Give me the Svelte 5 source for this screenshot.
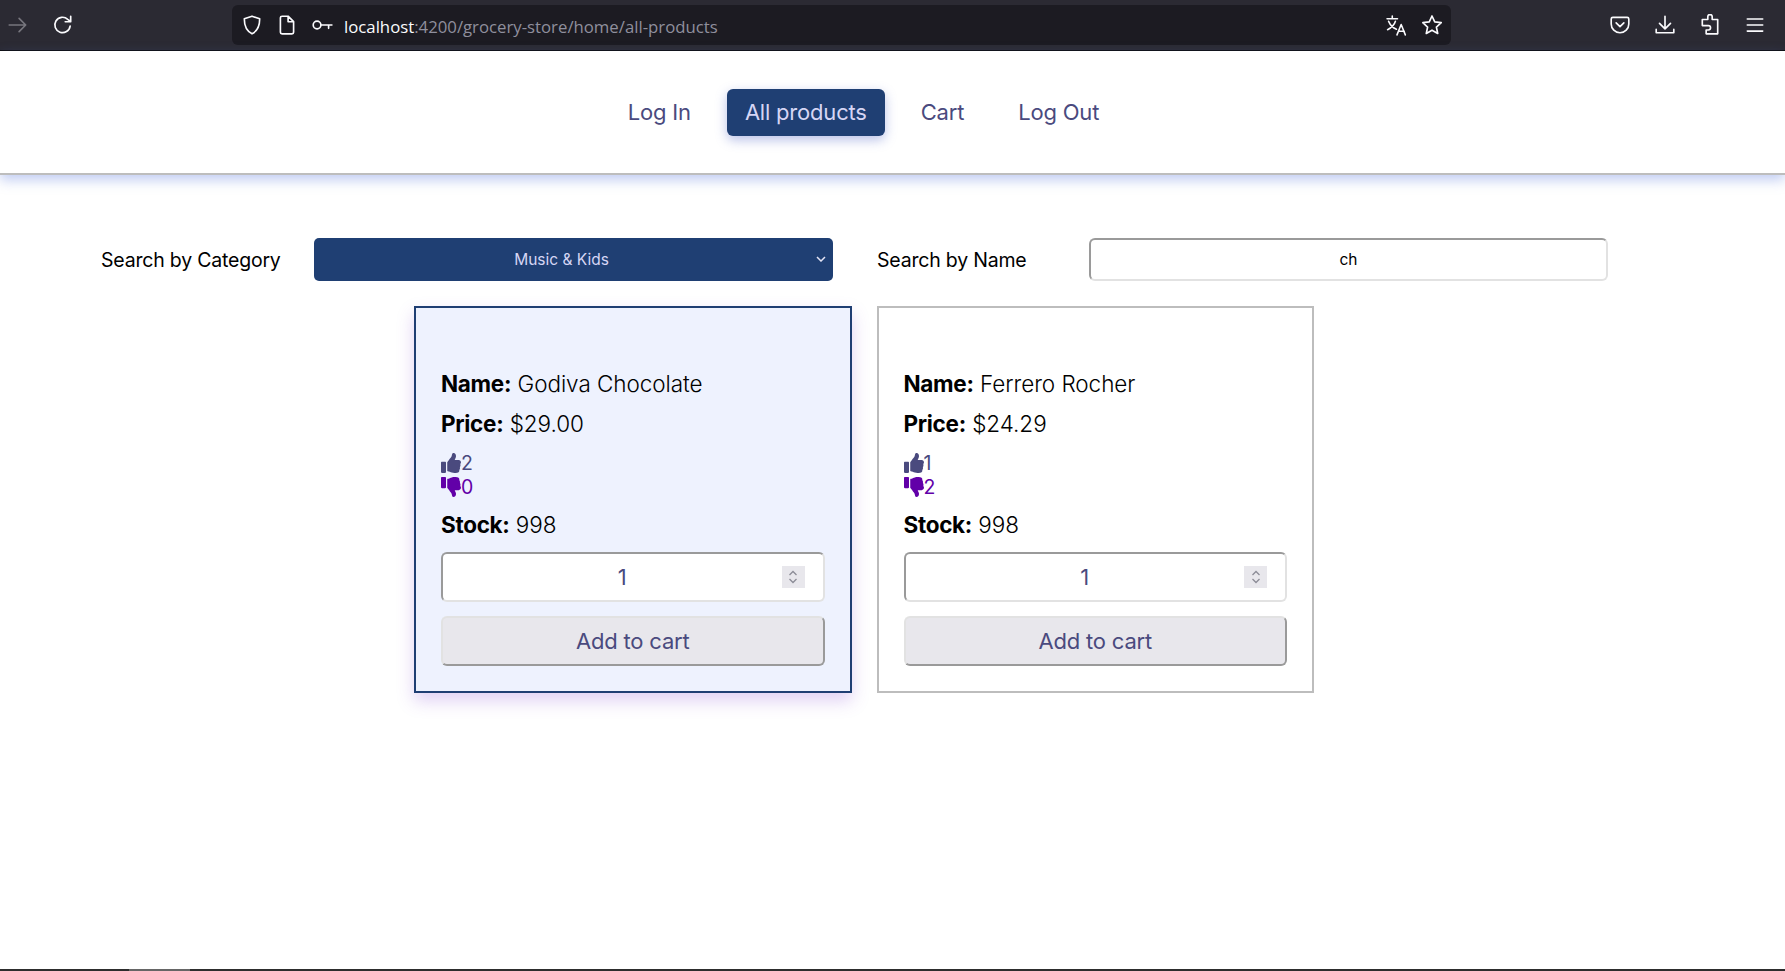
<script>
  const navItems = ['Log In', 'All products', 'Cart', 'Log Out'];
  const products = [
    { name: 'Godiva Chocolate', price: '$29.00', up: 2, down: 0, stock: 998, selected: true },
    { name: 'Ferrero Rocher', price: '$24.29', up: 1, down: 2, stock: 998, selected: false }
  ];
  const thumb = 'M104 224H24c-13.255 0-24 10.745-24 24v240c0 13.255 10.745 24 24 24h80c13.255 0 24-10.745 24-24V248c0-13.255-10.745-24-24-24zM384 81.452c0 42.416-25.97 66.208-33.277 94.548h101.723c33.397 0 59.397 27.746 59.553 58.098.084 17.938-7.546 37.249-19.439 49.197l-.11.11c9.836 23.337 8.237 56.037-9.308 79.469 8.681 25.895-.069 57.704-16.382 74.757 4.298 17.598 2.244 32.575-6.148 44.632C440.202 511.587 389.616 512 346.839 512l-2.845-.001c-48.287-.017-87.806-17.598-119.56-31.725-15.957-7.099-36.821-15.887-52.651-16.178-6.54-.12-11.783-5.457-11.783-11.998v-213.77c0-3.2 1.282-6.271 3.558-8.521 39.614-39.144 56.648-80.587 89.117-113.111 14.804-14.832 20.188-37.236 25.393-58.902C282.515 39.293 291.817 0 312 0c24 0 72 8 72 81.452z';
</script>

<div class="page">
  <header class="toolbar">
    <div class="tool-left">
      <svg class="ico dim" viewBox="0 0 20 20"><path d="M2 10h15M11 4l6 6-6 6" /></svg>
      <svg class="ico reload" viewBox="0 0 20 20"><path d="M16.500 11a7 7 0 1 1-2.200-6.200L17 7M17 2v5h-5" /></svg>
    </div>
    <div class="urlbar">
      <svg class="ico shield" viewBox="0 0 20 20"><path d="M10 2l7 2.400c0 6-1.200 10.800-7 13.600C4.200 15.200 3 10.400 3 4.400z" /></svg>
      <svg class="ico page-ico" viewBox="0 0 20 20"><path d="M4 3.500A1.500 1.500 0 0 1 5.500 2H11l5 5v9.500a1.500 1.500 0 0 1-1.500 1.500h-9A1.500 1.500 0 0 1 4 16.500zM11 2v5h5" /></svg>
      <svg class="ico key" viewBox="0 0 20 20"><circle cx="5.500" cy="10" r="3.500" /><path d="M9 10h10M16 10v3" /></svg>
      <span class="url"><b>localhost</b>:4200/grocery-store/home/all-products</span>
      <span class="url-spacer"></span>
      <svg class="ico translate" viewBox="0 0 22 22"><path d="M1 4.500h10M6 2v2.500M2.500 7c2 4.500 5 6.500 7.500 7.500M9 7c-1 3.500-3.500 6-7.500 8M10.500 20l4-10 4 10M12 16.500h5.500" /></svg>
      <svg class="ico star" viewBox="0 0 20 20"><path d="M10 1.800l2.500 5.400 5.900.7-4.400 4 1.200 5.800-5.200-3-5.200 3 1.200-5.800-4.400-4 5.900-.7z" /></svg>
    </div>
    <div class="tool-right">
      <svg class="ico" viewBox="0 0 20 20"><path d="M2 4.500A1.500 1.500 0 0 1 3.500 3h13A1.500 1.500 0 0 1 18 4.500V9a8 8 0 0 1-16 0zM6.500 8l3.500 3.500L13.500 8" /></svg>
      <svg class="ico" viewBox="0 0 20 20"><path d="M10 2v11M5 8.500l5 5 5-5M2 14v3h16v-3" /></svg>
      <svg class="ico" viewBox="0 0 20 20"><path d="M8 2.500a2 2 0 0 1 4 0V5h5v13H6.500v-3.500H8.500a2 2 0 0 0 0-4H3V5h5z" /></svg>
      <svg class="ico" viewBox="0 0 20 20"><path d="M3 4.500h14M3 10h14M3 15.500h14" /></svg>
    </div>
  </header>

  <nav class="nav">
    {#each navItems as item}
      <a class="nav-item" class:active={item === 'All products'} href="#top">{item}</a>
    {/each}
  </nav>

  <main class="content">
    <div class="search-row">
      <span class="label first">Search by Category</span>
      <div class="select-wrap">
        <select class="select">
          <option>Music &amp; Kids</option>
        </select>
        <svg class="chevron" viewBox="0 0 10 6"><path d="M1 1l4 4 4-4" /></svg>
      </div>
      <span class="label second">Search by Name</span>
      <input class="search" value="ch" />
    </div>

    <div class="cards">
      {#each products as p}
        <article class="card" class:selected={p.selected}>
          <p class="line"><strong>Name:</strong> {p.name}</p>
          <p class="line"><strong>Price:</strong> {p.price}</p>
          <div class="votes">
            <div class="vote up">
              <svg viewBox="0 0 512 512"><path d={thumb} /></svg>{p.up}
            </div>
            <div class="vote down">
              <svg class="flip" viewBox="0 0 512 512"><path d={thumb} /></svg>{p.down}
            </div>
          </div>
          <p class="line"><strong>Stock:</strong> {p.stock}</p>
          <div class="qty">
            <input class="qty-input" value="1" />
            <span class="spin">
              <svg viewBox="0 0 10 16"><path d="M1.500 6L5 2.500 8.500 6M1.500 10L5 13.500 8.500 10" /></svg>
            </span>
          </div>
          <button class="add">Add to cart</button>
        </article>
      {/each}
    </div>
  </main>

  <footer class="bottom-bar"><span class="thumb-seg"></span></footer>
</div>

<style>
  :global(body) {
    margin: 0;
    background: #fff;
  }
  .page {
    display: flex;
    flex-direction: column;
    height: 100vh;
    overflow: hidden;
    font-family: Inter, "Noto Sans", sans-serif;
  }
  .toolbar {
    display: flex;
    align-items: center;
    height: 50px;
    flex-shrink: 0;
    background: #2b2a33;
    border-bottom: 1px solid #0c0c0d;
  }
  .ico {
    width: 22px;
    height: 22px;
    fill: none;
    stroke: #fbfbfe;
    stroke-width: 1.500;
    stroke-linejoin: round;
    stroke-linecap: round;
  }
  .ico.dim {
    stroke: #77767e;
  }
  .tool-left {
    display: flex;
    align-items: center;
    gap: 23px;
    width: 232px;
    padding-left: 7px;
    box-sizing: border-box;
  }
  .urlbar {
    display: flex;
    align-items: center;
    width: 1219px;
    height: 40px;
    box-sizing: border-box;
    padding: 0 8px 0 9px;
    background: #1c1b22;
    border-radius: 6px;
  }
  .page-ico {
    margin-left: 13px;
  }
  .key {
    margin-left: 13px;
  }
  .url {
    margin-left: 11px;
    font-family: "Open Sans", sans-serif;
    font-size: 16.750px;
    color: #8f8f9d;
    white-space: nowrap;
    position: relative;
    top: 1px;
  }
  .url b {
    font-weight: 400;
    color: #fbfbfe;
  }
  .url-spacer {
    flex: 1;
  }
  .translate {
    width: 23px;
    height: 23px;
  }
  .star {
    margin-left: 12px;
  }
  .tool-right {
    display: flex;
    align-items: center;
    gap: 23px;
    margin-left: 158px;
  }
  .nav {
    display: flex;
    align-items: center;
    justify-content: center;
    gap: 18px;
    height: 122px;
    flex-shrink: 0;
    padding-right: 58px;
    background: #fff;
    border-bottom: 2px solid #bdbdbd;
    box-shadow: 0 5px 12px rgba(90, 120, 220, 0.38);
  }
  .nav-item {
    padding: 0 18px;
    height: 47px;
    line-height: 47px;
    border-radius: 6px;
    font-size: 22px;
    letter-spacing: -0.2px;
    color: #4a4a7e;
    text-decoration: none;
  }
  .nav-item.active {
    background: #1f3f73;
    color: #d6d6f5;
    box-shadow: 0 4px 12px rgba(80, 100, 200, 0.4);
  }
  .content {
    flex: 1;
    min-height: 0;
  }
  .search-row {
    display: flex;
    align-items: center;
    padding: 63px 0 0 101px;
  }
  .label {
    font-size: 19.500px;
    letter-spacing: -0.2px;
    color: #000;
  }
  .label.first {
    width: 213px;
  }
  .label.second {
    width: 212px;
    margin-left: 44px;
  }
  .select-wrap {
    position: relative;
    width: 519px;
    height: 43px;
  }
  .select {
    width: 100%;
    height: 100%;
    box-sizing: border-box;
    padding: 0 24px 0 0;
    appearance: none;
    background: #1f3f73;
    color: #d6d6f5;
    border: none;
    border-radius: 5px;
    font-family: inherit;
    font-size: 15.500px;
    text-align: center;
  }
  .chevron {
    position: absolute;
    right: 7px;
    top: 18px;
    width: 10px;
    height: 6px;
    fill: none;
    stroke: #e4e4f5;
    stroke-width: 1.500;
  }
  .search {
    width: 519px;
    height: 43px;
    box-sizing: border-box;
    border-width: 2px;
    border-style: solid;
    border-color: #9a9a9a #e2e2e2 #e2e2e2 #9a9a9a;
    border-radius: 6px;
    background: #fff;
    font-family: inherit;
    font-size: 15.500px;
    color: #000;
    text-align: center;
  }
  .cards {
    display: flex;
    justify-content: center;
    gap: 25px;
    margin-top: 25px;
    padding-right: 57px;
  }
  .card {
    width: 437.500px;
    height: 387px;
    box-sizing: border-box;
    padding: 61px 25px 24px 25px;
    background: #fff;
    border: 2px solid #bdbdbd;
  }
  .card.selected {
    background: #eef2fe;
    border-color: #1f3f73;
    box-shadow: 0 8px 16px rgba(130, 70, 210, 0.25);
  }
  .line {
    margin: 0 0 10px;
    font-size: 22.500px;
    line-height: 30px;
    letter-spacing: -0.05px;
    font-weight: 300;
    color: #000;
  }
  .line strong {
    font-weight: 700;
    letter-spacing: -0.3px;
  }
  .votes {
    margin: 12px 0 11px;
  }
  .vote {
    display: flex;
    align-items: center;
    height: 24px;
    font-size: 19.500px;
    letter-spacing: -0.2px;
  }
  .vote svg {
    width: 20px;
    height: 20px;
    fill: currentColor;
  }
  .vote svg.flip {
    transform: scaleY(-1);
  }
  .up {
    color: #4a4a7e;
  }
  .down {
    color: #6200a8;
  }
  .qty {
    display: flex;
    align-items: center;
    height: 50px;
    box-sizing: border-box;
    margin-top: 12px;
    padding: 0 18px 0 20px;
    background: #fff;
    border-width: 2px;
    border-style: solid;
    border-color: #9a9a9a #e2e2e2 #e2e2e2 #9a9a9a;
    border-radius: 6px;
  }
  .qty-input {
    flex: 1;
    min-width: 0;
    border: none;
    outline: none;
    padding: 0;
    background: none;
    font-family: inherit;
    font-size: 22px;
    color: #4a4a7e;
    text-align: center;
  }
  .spin {
    display: flex;
    align-items: center;
    justify-content: center;
    width: 23px;
    height: 22px;
    background: #e8e7ec;
  }
  .spin svg {
    width: 10px;
    height: 16px;
    fill: none;
    stroke: #8c8c96;
    stroke-width: 1.300;
  }
  .add {
    display: block;
    width: 100%;
    height: 50px;
    margin-top: 14px;
    box-sizing: border-box;
    background: #e8e7ec;
    border-width: 2px;
    border-style: solid;
    border-color: #e2e2e2 #9a9a9a #9a9a9a #e2e2e2;
    border-radius: 6px;
    font-family: inherit;
    font-size: 22px;
    letter-spacing: -0.2px;
    color: #4a4a7e;
  }
  .bottom-bar {
    height: 2px;
    flex-shrink: 0;
    background: #2d2d2d;
  }
  .thumb-seg {
    display: block;
    width: 61px;
    height: 2px;
    margin-left: 129px;
    background: #666;
  }
</style>
